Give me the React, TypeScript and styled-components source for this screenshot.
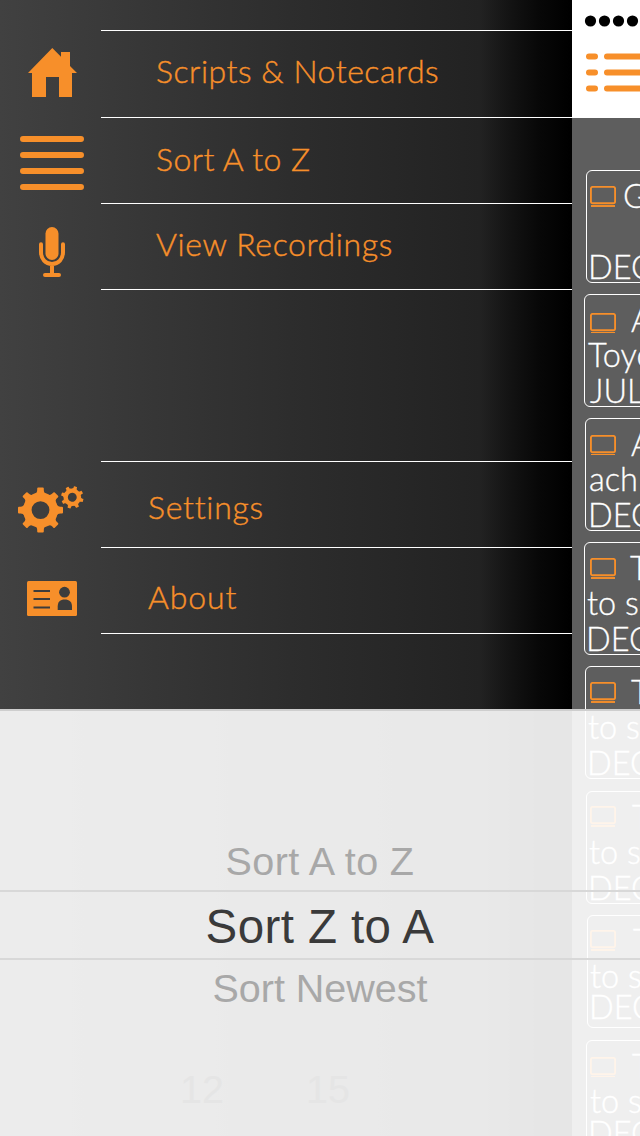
import React from 'react';
import styled, { createGlobalStyle } from 'styled-components';

const ORANGE = '#f78f2a';

const GlobalStyle = createGlobalStyle`
  * { box-sizing: border-box; }
  body { margin: 0; background: #000; }
`;

const Screen = styled.div`
  position: relative;
  display: flex;
  width: 640px;
  height: 1136px;
  overflow: hidden;
  font-family: Lato, 'Open Sans', sans-serif;
  font-weight: 300;
`;

const Drawer = styled.nav`
  flex: none;
  width: 572px;
  padding-top: 30px;
  background: linear-gradient(90deg, #414141 0px, #373737 140px, #2d2d2d 290px, #222 480px, #141414 508px, #070707 540px, #000 570px);
`;

const MenuGroup = styled.div<{ $gap?: number }>`
  display: flex;
  flex-direction: column;
  margin-bottom: ${(p) => p.$gap ?? 0}px;
`;

const MenuItem = styled.div<{ $h: number }>`
  display: flex;
  height: ${(p) => p.$h}px;
`;

const IconCell = styled.div<{ $top: number; $left: number }>`
  flex: none;
  width: 101px;
  padding: ${(p) => p.$top}px 0 0 ${(p) => p.$left}px;
  svg { display: block; }
`;

const Label = styled.div<{ $indent: number; $top: number; $spacing: number; $last?: boolean }>`
  flex: 1;
  border-top: 1px solid #fff;
  border-bottom: ${(p) => (p.$last ? '1px solid #fff' : 'none')};
  padding: ${(p) => p.$top}px 0 0 ${(p) => p.$indent}px;
  color: ${ORANGE};
  font-size: 32px;
  line-height: 40px;
  letter-spacing: ${(p) => p.$spacing}px;
  white-space: nowrap;
  -webkit-text-stroke: 0.4px ${ORANGE};
`;

const Content = styled.main`
  flex: none;
  width: 68px;
  overflow: hidden;
  background: #5e5e5e;
`;

const TopBar = styled.header`
  height: 118px;
  margin-bottom: 52px;
  background: #fff;
  svg { display: block; }
`;

const Card = styled.article<{ $left: number; $gap: number }>`
  width: 300px;
  height: 113px;
  margin: 0 0 ${(p) => p.$gap}px ${(p) => p.$left}px;
  border: 1.3px solid #fff;
  border-radius: 6px;
  color: #fff;
  font-size: 32.5px;
  white-space: nowrap;
  -webkit-text-stroke: 0.3px #fff;
`;

const CardHead = styled.div<{ $left: number; $top: number }>`
  display: flex;
  height: 42px;
  padding: ${(p) => p.$top}px 0 0 ${(p) => p.$left}px;
  svg { flex: none; display: block; }
`;

const CardTitle = styled.span<{ $left: number; $up: number }>`
  margin: ${(p) => p.$up}px 0 0 ${(p) => p.$left}px;
  line-height: 36px;
`;

const CardLine = styled.div<{ $h: number; $left: number }>`
  height: ${(p) => p.$h}px;
  padding-left: ${(p) => p.$left}px;
  line-height: 36px;
`;

const Picker = styled.section`
  position: absolute;
  inset: 709px 0 0 0;
  display: flex;
  flex-direction: column;
  border-top: 2px solid #cecece;
  background: rgba(255, 255, 255, 0.9);
  font-family: 'Liberation Sans', Arial, sans-serif;
  font-weight: 400;
  text-align: center;
  white-space: nowrap;
`;

const Option = styled.div<{ $shift: number; $spacing: number }>`
  height: 60px;
  line-height: ${(p) => 60 + p.$shift}px;
  font-size: 39.5px;
  letter-spacing: ${(p) => p.$spacing}px;
  color: #a8a8a8;
  &:first-child { margin-top: 119px; }
`;

const Selected = styled.div`
  height: 70px;
  border: solid #d8d8d8;
  border-width: 2px 0;
  line-height: 70px;
  font-size: 47.5px;
  letter-spacing: 0.4px;
  color: #3a3a3a;
`;

const Faded = styled.div`
  display: flex;
  gap: 82px;
  margin-top: 46px;
  padding-left: 180px;
  font-size: 39.5px;
  line-height: 46px;
  color: #e5e5e5;
`;

const HomeIcon = () => (
  <svg width="50" height="50" viewBox="0 0 50 50" fill={ORANGE}>
    <path d="M0 25 24.3 0 33 8.7V4h9v14l7 7h-5v24H31V29H18v20H4V25Z" />
  </svg>
);

const BarsIcon = () => (
  <svg width="64" height="54" viewBox="0 0 64 54" stroke={ORANGE} strokeWidth="6" strokeLinecap="round">
    <path d="M3 3h58M3 19h58M3 35h58M3 51h58" />
  </svg>
);

const MicIcon = () => (
  <svg width="28" height="50" viewBox="0 0 28 50" fill="none" stroke={ORANGE} strokeLinecap="round" strokeWidth="4">
    <rect x="7.500" y="0" width="13" height="33" rx="6.500" fill={ORANGE} stroke="none" />
    <path d="M3 17.200v8c0 6.500 4.500 11.800 11 11.800s11-5.300 11-11.800v-8M14 38v9M7 48h14" />
  </svg>
);

const toothAngles = [0, 45, 90, 135, 180, 225, 270, 315];

const Gear = ({ x, y, s, turn = 0 }: { x: number; y: number; s: number; turn?: number }) => (
  <g transform={`translate(${x} ${y}) rotate(${turn}) scale(${s})`}>
    <circle r="13.200" fill="none" stroke={ORANGE} strokeWidth="8.600" />
    {toothAngles.map((a) => (
      <path
        key={a}
        transform={`rotate(${a})`}
        d="M-6-16C-4-16.800-3.300-18-3.300-20V-21.500Q-3.300-22.500-2.300-22.500H2.300Q3.300-22.500 3.300-21.500V-20C3.300-18 4-16.800 6-16Z"
        fill={ORANGE}
      />
    ))}
  </g>
);

const GearsIcon = () => (
  <svg width="67" height="48" viewBox="0 0 67 48">
    <Gear x={22.5} y={24.100} s={1} />
    <Gear x={54.300} y={11.300} s={0.5} turn={17} />
  </svg>
);

const ContactIcon = () => (
  <svg width="50" height="36" viewBox="0 0 50 36">
    <rect x="0" y="0" width="50" height="35" rx="1.500" fill={ORANGE} />
    <path d="M6.500 10h16.500M6.500 18h16.500M6.500 26.500h16.500" stroke="#3c3c3c" strokeWidth="2" />
    <circle cx="37.500" cy="11.200" r="5.400" fill="#3c3c3c" />
    <path d="M30.700 29v-3.500c0-4.500 2.500-7 7-7s7.300 2.500 7.300 7V29Z" fill="#3c3c3c" />
  </svg>
);

const StatusAndToggle = () => (
  <svg width="68" height="118" viewBox="0 0 68 118">
    {[18.500, 32.500, 46.500, 60.500].map((cx) => (
      <circle key={cx} cx={cx} cy="21" r="5.600" />
    ))}
    <path
      d="M17 56.500h6M35 56.500h40M17 72.500h6M35 72.500h40M17 88.500h6M35 88.500h40"
      stroke={ORANGE}
      strokeWidth="6"
      strokeLinecap="round"
    />
  </svg>
);

const ScreenIcon = ({ low }: { low?: boolean }) => (
  <svg width="26" height="22" viewBox="0 0 26 22" fill="none" stroke={ORANGE}>
    <rect x="0.900" y="0.900" width="24.200" height="16.400" rx="1.800" strokeWidth="1.900" />
    <path d={low ? 'M1 19.500h24' : 'M1 20h24'} strokeWidth={low ? 1 : 1.900} />
  </svg>
);

interface CardData {
  left: number;
  gap: number;
  icon: number;
  low?: boolean;
  titleX: number;
  title: string;
  line: string;
  lineX: number;
  lineH: number;
  date: string;
  dateX: number;
}

const cards: CardData[] = [
  { left: 14, gap: 11, icon: 15, titleX: 623, title: 'G', line: '', lineX: 588, lineH: 36, date: 'DEC', dateX: 588 },
  { left: 12, gap: 11, icon: 18, low: true, titleX: 631, title: 'A', line: 'Toyo', lineX: 588, lineH: 36, date: 'JULY', dateX: 590 },
  { left: 13, gap: 11, icon: 16, low: true, titleX: 631, title: 'A', line: 'ach', lineX: 589, lineH: 36, date: 'DEC', dateX: 588 },
  { left: 12, gap: 11, icon: 15, titleX: 630, title: 'T', line: 'to s', lineX: 587, lineH: 36, date: 'DEC', dateX: 586 },
  { left: 13, gap: 12, icon: 15, titleX: 631, title: 'T', line: 'to s', lineX: 588, lineH: 36, date: 'DEC', dateX: 587 },
  { left: 14, gap: 11, icon: 14, titleX: 632, title: 'T', line: 'to s', lineX: 589, lineH: 36, date: 'DEC', dateX: 588 },
  { left: 15, gap: 12, icon: 14, titleX: 633, title: 'T', line: 'to s', lineX: 590, lineH: 31, date: 'DEC', dateX: 589 },
  { left: 14, gap: 0, icon: 16, low: true, titleX: 632, title: 'T', line: 'to s', lineX: 590, lineH: 32, date: 'DEC', dateX: 588 },
];

export default function App() {
  return (
    <>
      <GlobalStyle />
      <Screen>
        <Drawer>
          <MenuGroup $gap={171}>
            <MenuItem $h={87}>
              <IconCell $top={18} $left={28}><HomeIcon /></IconCell>
              <Label $indent={55} $top={20} $spacing={0.52}>Scripts &amp; Notecards</Label>
            </MenuItem>
            <MenuItem $h={86}>
              <IconCell $top={19} $left={20}><BarsIcon /></IconCell>
              <Label $indent={55} $top={21} $spacing={0.42}>Sort A to Z</Label>
            </MenuItem>
            <MenuItem $h={87}>
              <IconCell $top={24} $left={38}><MicIcon /></IconCell>
              <Label $indent={55} $top={20} $spacing={0.62} $last>View Recordings</Label>
            </MenuItem>
          </MenuGroup>
          <MenuGroup>
            <MenuItem $h={86}>
              <IconCell $top={25} $left={18}><GearsIcon /></IconCell>
              <Label $indent={47} $top={25} $spacing={0.7}>Settings</Label>
            </MenuItem>
            <MenuItem $h={87}>
              <IconCell $top={34} $left={27}><ContactIcon /></IconCell>
              <Label $indent={47} $top={29} $spacing={0.9} $last>About</Label>
            </MenuItem>
          </MenuGroup>
        </Drawer>
        <Content>
          <TopBar><StatusAndToggle /></TopBar>
          {cards.map((c, i) => (
            <Card key={i} $left={c.left} $gap={c.gap}>
              <CardHead $left={590 - 573 - c.left} $top={c.icon}>
                <ScreenIcon low={c.low} />
                <CardTitle $left={c.titleX - 616} $up={7 - c.icon}>{c.title}</CardTitle>
              </CardHead>
              <CardLine $h={c.lineH} $left={c.lineX - 573 - c.left}>{c.line}</CardLine>
              <CardLine $h={36} $left={c.dateX - 573 - c.left}>{c.date}</CardLine>
            </Card>
          ))}
        </Content>
        <Picker>
          <Option $shift={2} $spacing={0.4}>Sort A to Z</Option>
          <Selected>Sort Z to A</Selected>
          <Option $shift={-3} $spacing={0}>Sort Newest</Option>
          <Faded>
            <span>12</span>
            <span>15</span>
          </Faded>
        </Picker>
      </Screen>
    </>
  );
}
